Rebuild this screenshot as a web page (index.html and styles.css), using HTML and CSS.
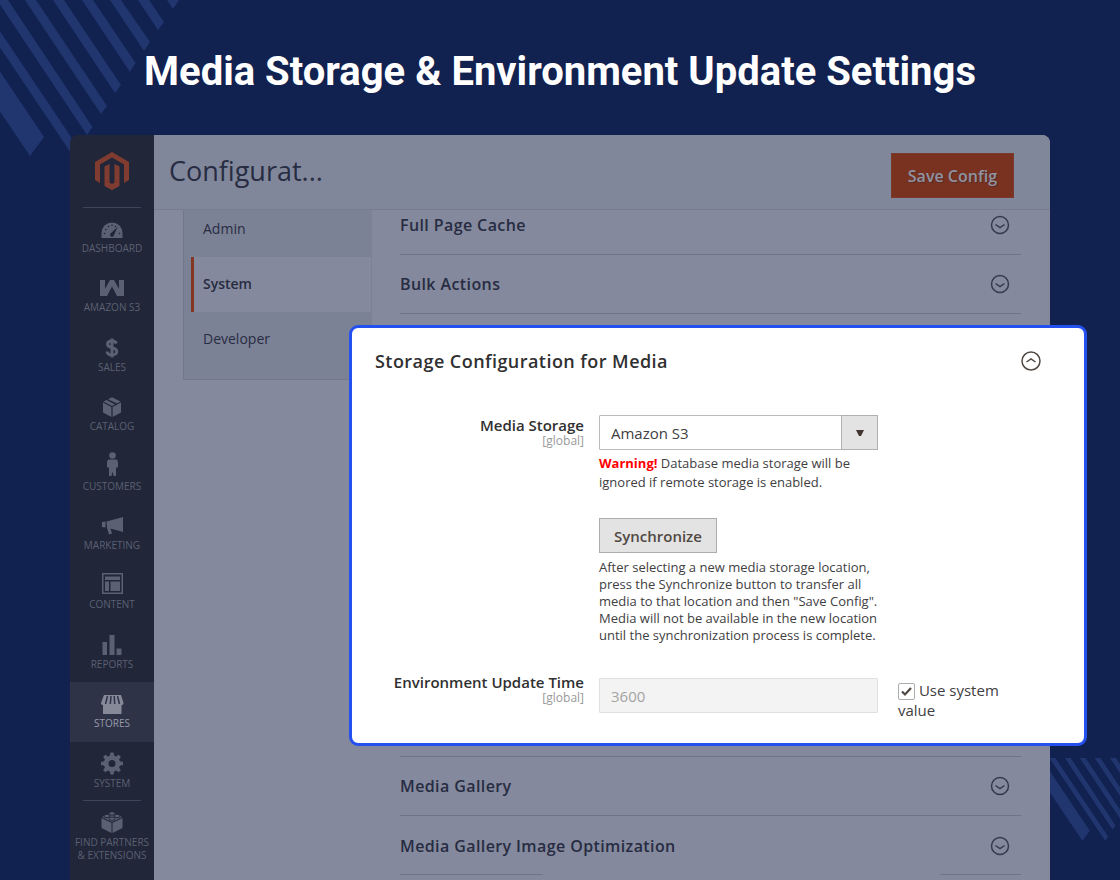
FILE: index.html
```html
<!DOCTYPE html>
<html lang="en">
<head>
    <meta charset="UTF-8">
    <meta name="viewport" content="width=device-width, initial-scale=1.0">
    <title>Media Storage &amp; Environment Update Settings</title>
    <link rel="stylesheet" href="styles.css">
</head>
<body>

<!-- Background stripes -->
<svg class="stripes stripes-top" viewBox="-80 0 260 160" aria-hidden="true">
    <g id="stripes">
        <path d="M-75 0L30 156L44 137L-48 0Z"/>
        <path d="M-32 0L73 156L78.500 148L-21 0Z"/>
        <path d="M-3 0L87 135L92.500 127L8 0Z"/>
        <path d="M25 0L101 114L107 106L36 0Z"/>
        <path d="M53 0L115 93L121 85L64 0Z"/>
        <path d="M82 0L130 72L135.500 63L93 0Z"/>
        <path d="M110 0L144 51L150 42L121 0Z"/>
        <path d="M138 0L158 30L164 22L149 0Z"/>
        <path d="M167 0L173 9L179 0Z"/>
    </g>
</svg>
<svg class="stripes stripes-bottom" viewBox="-80 0 260 160" aria-hidden="true"><use href="#stripes"/></svg>

<h1 class="page-title">Media Storage &amp; Environment Update Settings</h1>

<div class="window">
    <nav class="sidebar">
        <a class="logo" href="#" aria-label="Home">
            <svg viewBox="0 0 34 38" width="34" height="38"><path d="M17 0L34 10V28L29 31V12.500L17 5.500L5 12.500V31L0 28V10Z"/><path d="M9.500 14.500L14.500 12V30.500L17 32L19.500 30.500V12L24.500 14.500V34L17 38L9.500 34Z"/></svg>
        </a>
        <ul class="menu">
            <li><a href="#">
                <svg viewBox="0 0 26 26"><path d="M2.500 22V17A10.500 10.500 0 0 1 23.500 17V22Z"/><g class="cut"><circle cx="5.500" cy="17.500" r=".8"/><circle cx="6.800" cy="13.500" r=".8"/><circle cx="9.500" cy="10.500" r=".8"/><circle cx="13" cy="9.300" r=".8"/><circle cx="16.500" cy="10.500" r=".8"/><circle cx="20.500" cy="17.500" r=".8"/><path d="M18.500 11L15 19A2 2 0 1 1 11.500 17.500Z"/></g></svg>
                Dashboard</a></li>
            <li><a href="#">
                <svg viewBox="0 0 26 26"><path d="M1 5H6V14L11 5H15L20 14V5H25V21H18L13 11.500L8 21H1Z"/></svg>
                Amazon S3</a></li>
            <li><a href="#">
                <svg viewBox="0 0 26 26"><path class="line" d="M17.500 8.500C16.500 6.500 14.500 6 13 6C10.500 6 8.500 7.200 8.500 9.300C8.500 14 17.800 11.500 17.800 16.500C17.800 18.800 15.500 20 13 20C10.500 20 8.500 19 8 16.500M13 3.500V22.500"/></svg>
                Sales</a></li>
            <li><a href="#">
                <svg viewBox="0 0 26 26"><path d="M4 8.500L12.400 13V23L4 18.500ZM22 8.500V18.500L13.600 23V13ZM4.500 7.500L7.500 6L16 10.500L13 12ZM9 5.200L13 3.200L21.500 7.500L18 9.500Z"/></svg>
                Catalog</a></li>
            <li><a href="#">
                <svg viewBox="0 0 26 26"><circle cx="13.500" cy="1.500" r="3.300"/><path d="M10 5.500H17C18.500 5.500 19 7.500 19 9.500V13.500H17V22H14.500L13.500 17.500L12.500 22H10V13.500H8V9.500C8 7.500 8.500 5.500 10 5.500Z"/></svg>
                Customers</a></li>
            <li><a href="#">
                <svg viewBox="0 0 26 26"><path d="M3 9L6.500 8.500V14.500L3 14ZM7.500 8.500L24 4V19L11.500 15.500L13 20.500L10 21.500L8 15Z"/></svg>
                Marketing</a></li>
            <li><a href="#">
                <svg viewBox="0 0 26 26"><path fill-rule="evenodd" d="M3 1H24V22H3ZM4.500 2.500V20.500H22.500V2.500ZM6 4.500H21V8H6ZM6 9.500H10V19H6ZM11.500 9.500H21V19H11.500Z"/></svg>
                Content</a></li>
            <li><a href="#">
                <svg viewBox="0 0 26 26"><path d="M3.500 10H8V23H3.500ZM10.500 3H15.500V23H10.500ZM17.500 16.500H22.500V23H17.500Z"/></svg>
                Reports</a></li>
            <li class="active"><a href="#">
                <svg viewBox="0 0 26 26"><path d="M5 4H22L24.500 12C24.500 13.500 23.500 14 22.500 14V23H4V14C3 14 2 13.500 2 12Z"/><path class="slit" d="M8.500 5L6.500 13M12 5L11.300 13M15.200 5L15.700 13M18.500 5L20.500 13"/></svg>
                Stores</a></li>
            <li><a href="#">
                <svg viewBox="0 0 26 26"><path fill-rule="evenodd" d="M11.500 1.500H14.500L15.200 4.600L17 5.400L19.700 3.700L21.800 5.800L20.100 8.500L20.900 10.300L24 11V14L20.900 14.700L20.100 16.500L21.800 19.200L19.700 21.300L17 19.600L15.200 20.400L14.500 23.500H11.500L10.800 20.400L9 19.600L6.300 21.300L4.200 19.200L5.900 16.500L5.100 14.700L2 14V11L5.100 10.300L5.900 8.500L4.200 5.800L6.300 3.700L9 5.400L10.800 4.600ZM13 9A3.500 3.500 0 1 0 13 16A3.500 3.500 0 1 0 13 9Z"/></svg>
                System</a></li>
        </ul>
        <a class="partners" href="#">
            <svg viewBox="0 0 26 26"><path d="M2.500 8L12.500 13V23L2.500 18ZM23.500 8V18L13.500 23V13ZM3 7L13 2L23 7L13 12Z"/><g class="studs"><ellipse cx="13" cy="3.500" rx="3" ry="1.700"/><ellipse cx="8" cy="6" rx="3" ry="1.700"/><ellipse cx="18" cy="6" rx="3" ry="1.700"/><ellipse cx="13" cy="8.700" rx="3" ry="1.700"/></g></svg>
            Find Partners<br>&amp; Extensions
        </a>
    </nav>

    <main class="main">
        <header class="toolbar">
            <h2>Configurat...</h2>
            <button class="save" type="button">Save Config</button>
        </header>

        <div class="content">
            <nav class="tabs">
                <a href="#">Admin</a>
                <a class="current" href="#">System</a>
                <a href="#">Developer</a>
            </nav>

            <div class="sections">
                <button class="section" type="button">Full Page Cache
                    <svg class="toggle" viewBox="0 0 20 20"><circle cx="10" cy="10" r="8.500"/><path d="M5.500 9.500L10 12.500L14.500 9.500"/></svg>
                </button>
                <button class="section" type="button">Bulk Actions
                    <svg class="toggle" viewBox="0 0 20 20"><circle cx="10" cy="10" r="8.500"/><path d="M5.500 9.500L10 12.500L14.500 9.500"/></svg>
                </button>

                <!-- Opened section, raised over the page -->
                <section class="panel">
                    <button class="panel-head" type="button">Storage Configuration for Media
                        <svg class="toggle" viewBox="0 0 20 20"><circle cx="10" cy="10" r="9"/><path d="M5.500 11L10 8L14.500 11"/></svg>
                    </button>
                    <form class="fields">
                        <label class="name" for="storage">Media Storage <small>[global]</small></label>
                        <div class="field">
                            <div class="select">
                                <select id="storage">
                                    <option>Amazon S3</option>
                                </select>
                                <span class="arrow"><svg viewBox="0 0 8 6" width="8" height="6"><path d="M0 0H8L5 6H3Z"/></svg></span>
                            </div>
                            <p class="warning"><strong>Warning!</strong> Database media storage will be ignored if remote storage is enabled.</p>
                        </div>

                        <div class="field sync">
                            <button class="sync-button" type="button">Synchronize</button>
                            <p class="note">After selecting a new media storage location, press the Synchronize button to transfer all media to that location and then "Save Config". Media will not be available in the new location until the synchronization process is complete.</p>
                        </div>

                        <label class="name" for="time">Environment Update Time <small>[global]</small></label>
                        <div class="field time">
                            <input class="text" id="time" type="text" value="3600" disabled>
                        </div>
                        <label class="inherit"><input type="checkbox" checked> Use system value</label>
                    </form>
                </section>

                <button class="section first" type="button">Media Gallery
                    <svg class="toggle" viewBox="0 0 20 20"><circle cx="10" cy="10" r="8.500"/><path d="M5.500 9.500L10 12.500L14.500 9.500"/></svg>
                </button>
                <button class="section last" type="button">Media Gallery Image Optimization
                    <svg class="toggle" viewBox="0 0 20 20"><circle cx="10" cy="10" r="8.500"/><path d="M5.500 9.500L10 12.500L14.500 9.500"/></svg>
                </button>
            </div>
        </div>
    </main>
</div>

</body>
</html>
```
FILE: styles.css
```css
* {
    box-sizing: border-box;
}

body {
    margin: 0;
    height: 100vh;
    overflow: hidden;
    position: relative;
    display: flex;
    flex-direction: column;
    background-color: #112150;
    font-family: "Open Sans", "Noto Sans", sans-serif;
}

button {
    font-family: inherit;
    cursor: pointer;
}

a {
    color: inherit;
    text-decoration: none;
}

/* Decoration behind the window */
.stripes {
    position: absolute;
    fill: #21366f;
}

.stripes-top {
    top: 0;
    left: -80px;
    width: 260px;
}

.stripes-bottom {
    top: 758px;
    right: -42px;
    width: 138px;
}

.page-title {
    position: relative;
    margin: 0;
    padding: 48px 20px 39px;
    color: #fff;
    font-family: Roboto, sans-serif;
    font-size: 40px;
    font-weight: 700;
    line-height: 48px;
    text-align: center;
}

.window {
    position: relative;
    flex: 1;
    display: flex;
    margin: 0 70px;
}

/* Sidebar */
.sidebar {
    width: 84px;
    flex-shrink: 0;
    background-color: #212638;
    border-radius: 8px 0 0 0;
    color: #5b6073;
    font-size: 10px;
    line-height: 13px;
    text-align: center;
    text-transform: uppercase;
}

.logo {
    display: block;
    height: 72px;
    padding-top: 17px;
}

.logo svg {
    fill: #803c30;
}

.menu {
    display: grid;
    grid-auto-rows: 1fr;
    height: 594px;
    margin: 0;
    padding: 0;
    list-style: none;
}

.sidebar svg {
    display: block;
    margin: 0 auto;
}

.menu a,
.partners {
    display: block;
    padding-top: 9px;
}

.menu svg,
.partners svg {
    width: 26px;
    height: 26px;
    fill: #5b6073;
    overflow: visible;
}

.menu::before,
.partners::before {
    content: "";
    height: 1px;
    margin: 0 13px;
    background-color: #404559;
}

.menu::before {
    position: absolute;
    width: 58px;
}

.partners::before {
    display: block;
    margin-top: -10px;
    margin-bottom: 9px;
}

.menu .active {
    background-color: #2f3347;
    color: #969aa9;
}

.menu .active svg {
    fill: #858998;
}

.menu .cut {
    fill: #212638;
}

.menu .line {
    fill: none;
    stroke: #5b6073;
    stroke-width: 3;
}

.menu .slit {
    stroke: #2f3347;
    stroke-width: 1.5;
}

.studs {
    stroke: #212638;
    stroke-width: 1;
}

/* Main area */
.main {
    flex: 1;
    min-width: 0;
    background-color: #84899d;
    border-radius: 0 8px 0 0;
    color: #272c42;
}

.toolbar {
    position: relative;
    z-index: 1;
    display: flex;
    align-items: flex-start;
    justify-content: space-between;
    height: 75px;
    padding: 18px 36px 0 15px;
    background-color: #81879a;
    border-bottom: 1px solid #777c90;
    border-radius: 0 8px 0 0;
}

.toolbar h2 {
    margin: 0;
    font-size: 27px;
    font-weight: 400;
    line-height: 36px;
}

.save {
    height: 45px;
    padding: 0 16px;
    border: 1px solid #7b392d;
    background-color: #78321f;
    color: #8f93a2;
    font-size: 16px;
    font-weight: 600;
    text-shadow: 1px 1px 0 #5f2b25;
}

.content {
    display: flex;
    align-items: flex-start;
    gap: 28px;
    padding: 0 29px;
}

.tabs {
    width: 189px;
    margin-top: -8px;
    padding-bottom: 12px;
    background-color: #7c8296;
    border: 1px solid #73788c;
    border-top: 0;
    border-right-color: #7c8296;
    font-size: 14px;
    line-height: 54px;
}

.tabs a {
    display: block;
    height: 55px;
    padding-left: 19px;
}

.tabs .current {
    margin-left: 7px;
    padding-left: 9px;
    border-left: 3px solid #823624;
    background-color: #84899d;
    font-weight: 600;
}

.sections {
    flex: 1;
    min-width: 0;
    margin-top: -14px;
}

.section,
.panel-head {
    display: flex;
    align-items: center;
    justify-content: space-between;
    width: 100%;
    padding: 0;
    border: 0;
    background: none;
    color: inherit;
    font-size: 16px;
    font-weight: 600;
    letter-spacing: .025em;
    text-align: left;
}

.section {
    height: 59px;
    padding-right: 11px;
    border-bottom: 1px solid #6f748a;
}

.section.first {
    height: 60px;
    border-top: 1px solid #6f748a;
}

/* The bottom rule is broken in the middle */
.section.last {
    border: 0;
    background: linear-gradient(to right, #6f748a 23%, transparent 23%, transparent 87%, #6f748a 87%) bottom / 100% 1px no-repeat;
}

.toggle {
    width: 20px;
    height: 20px;
    fill: none;
    stroke: #333a50;
    stroke-width: 1.5;
}

/* Opened section */
.panel {
    position: relative;
    z-index: 2;
    margin: 11px -66px 10px -51px;
    padding: 20px 43px 23px 23px;
    background-color: #fff;
    border: 3px solid #2450f0;
    border-radius: 9px;
    color: #41362f;
}

.panel-head {
    height: 26px;
    color: #303030;
    font-size: 18px;
}

.panel-head .toggle {
    stroke: #514943;
}

.fields {
    display: grid;
    grid-template-columns: 209fr 279fr 148fr;
    column-gap: 15px;
    margin-top: 41px;
}

.name {
    grid-column: 1;
    color: #303030;
    font-size: 15px;
    font-weight: 600;
    line-height: 20px;
    text-align: right;
}

.name small {
    display: block;
    color: #999;
    font-size: 12px;
    font-weight: 400;
    line-height: 12px;
}

.field {
    grid-column: 2;
}

.field p {
    margin: 0;
    color: #41403f;
    font-size: 13px;
}

.select {
    position: relative;
}

.select select,
.text {
    display: block;
    width: 100%;
    height: 35px;
    padding: 0 11px;
    border: 1px solid #bbb;
    border-radius: 1px;
    background-color: #fff;
    color: #41403f;
    font-family: inherit;
    font-size: 15px;
    appearance: none;
}

.arrow {
    position: absolute;
    top: 0;
    right: 0;
    bottom: 0;
    display: flex;
    align-items: center;
    justify-content: center;
    width: 37px;
    border: 1px solid #b0b0b0;
    background-color: #e3e3e3;
    pointer-events: none;
}

.arrow svg {
    fill: #41362f;
}

.field .warning {
    padding-top: 4px;
    line-height: 19px;
}

.warning strong {
    color: #f00;
}

.sync {
    margin: 26px 0 28px;
}

.sync-button {
    display: block;
    height: 35px;
    padding: 0 14px;
    border: 1px solid #adadad;
    background-color: #e3e3e3;
    color: #514943;
    font-size: 15px;
    font-weight: 600;
}

.field .note {
    padding-top: 6px;
    line-height: 17px;
}

.time {
    padding-top: 6px;
}

.text:disabled {
    border-color: #e0e0e0;
    background-color: #f3f3f3;
    color: #a3a3a3;
}

.inherit {
    grid-column: 3;
    padding: 8px 20px 0 5px;
    color: #41403f;
    font-size: 15px;
    line-height: 20px;
}

.inherit input {
    width: 17px;
    height: 17px;
    margin: 0;
    border: 1px solid #adadad;
    border-radius: 2px;
    background: #fff url("data:image/svg+xml,%3Csvg xmlns='http://www.w3.org/2000/svg' viewBox='0 0 15 15'%3E%3Cpath d='M3 7.500L6 10.500L12 4' fill='none' stroke='%23514943' stroke-width='2.200'/%3E%3C/svg%3E") center no-repeat;
    vertical-align: middle;
    appearance: none;
}
```
